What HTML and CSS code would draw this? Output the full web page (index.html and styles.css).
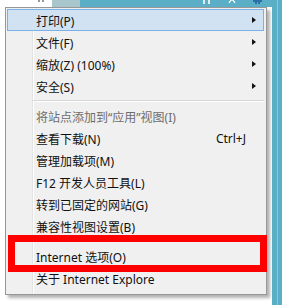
FILE: index.html
```html
<!DOCTYPE html>
<html lang="zh-CN">
<head>
    <meta charset="UTF-8">
    <meta name="viewport" content="width=device-width, initial-scale=1.0">
    <title>工具菜单</title>
    <link rel="stylesheet" href="styles.css">
</head>
<body>
    <div class="screen">
        <div class="main-col">
            <div class="topbar">
                <div class="tb-white">
                    <svg class="tb-dots" width="6" height="3" viewBox="0 0 6 3"><path d="M0 0h2v2H0zM4 0h2v2H4z" fill="#9a9a9a"/></svg>
                </div>
                <div class="tb-gray"></div>
                <div class="tb-teal">
                    <svg class="tb-icon" width="8" height="7" viewBox="0 0 8 7"><path d="M1 0v4M6 0v4" stroke="#fff" stroke-width="1.6"/></svg>
                    <svg class="tb-icon" width="8" height="7" viewBox="0 0 8 7"><path d="M1 3l2-3M7 3L5 0M3 0h2" stroke="#fff" stroke-width="1.3" fill="none"/></svg>
                    <svg class="tb-icon" width="9" height="7" viewBox="0 0 9 7"><path d="M0 0h9v2H7v2H5V2H4v2H2V2H0z" fill="#2d6da8"/></svg>
                </div>
            </div>

            <div class="menu">
                <div class="item active"><span class="label">打印(P)</span><span class="arrow"></span></div>
                <div class="item"><span class="label">文件(F)</span><span class="arrow"></span></div>
                <div class="item"><span class="label">缩放(Z) (100%)</span><span class="arrow"></span></div>
                <div class="item"><span class="label">安全(S)</span><span class="arrow"></span></div>
                <div class="sep"></div>
                <div class="item disabled"><span class="label">将站点添加到“应用”视图(I)</span></div>
                <div class="item"><span class="label">查看下载(N)</span><span class="shortcut">Ctrl+J</span></div>
                <div class="item"><span class="label">管理加载项(M)</span></div>
                <div class="item"><span class="label">F12 开发人员工具(L)</span></div>
                <div class="item"><span class="label">转到已固定的网站(G)</span></div>
                <div class="item"><span class="label">兼容性视图设置(B)</span></div>
                <div class="sep"></div>
                <div class="item"><span class="label">Internet 选项(O)</span></div>
                <div class="item"><span class="label">关于 Internet Explore</span></div>
            </div>
        </div>
        <div class="side-teal"></div>
    </div>

    <div class="mark"></div>
</body>
</html>
```

FILE: styles.css
```css
html, body {
    margin: 0;
    padding: 0;
}

body {
    width: 282px;
    height: 305px;
    overflow: hidden;
    background-color: #fff;
    font-family: "Noto Sans", "Noto Sans CJK SC", sans-serif;
    font-size: 12px;
    color: #111;
}

.screen {
    display: flex;
    height: 305px;
}

.main-col {
    width: 272px;
}

.topbar {
    display: flex;
    height: 7px;
}

.tb-white {
    width: 52px;
    background-color: #fff;
    padding-left: 38px;
    box-sizing: border-box;
}

.tb-dots {
    display: block;
}

.tb-gray {
    width: 28px;
    background-color: #a9c6cd;
}

.tb-teal {
    flex: 1;
    display: flex;
    align-items: flex-start;
    background-color: #5aaec6;
    padding-left: 123px;
    gap: 17px;
}

.tb-icon {
    display: block;
}

.menu {
    margin-left: 5px;
    width: 262px;
    box-sizing: border-box;
    border: 1px solid #979797;
    background-color: #f0f0f0;
    background-image: linear-gradient(to right, transparent 26px, #e2e3e3 26px, #e2e3e3 27px, #fff 27px, #fff 28px, transparent 28px);
    padding: 1px 2px 5px 1px;
    box-shadow: 3px 3px 3px rgba(0, 0, 0, 0.3);
}

.item {
    display: flex;
    align-items: center;
    height: 22px;
    box-sizing: border-box;
    border: 1px solid transparent;
    padding-left: 28px;
    padding-top: 1px;
    white-space: nowrap;
}

.item.active {
    background-color: #d1e3f3;
    border-color: #7ab1e6;
}

.item.disabled {
    color: #6d6d6d;
}

.label {
    flex: 1;
}

.shortcut {
    margin-right: 17px;
}

.arrow {
    width: 17px;
    height: 7px;
    box-sizing: border-box;
    padding-left: 6px;
}

.arrow::before {
    content: "";
    display: block;
    width: 0;
    height: 0;
    border-left: 4px solid #111;
    border-top: 3.5px solid transparent;
    border-bottom: 3.5px solid transparent;
}

.sep {
    height: 1px;
    margin: 3px 0 3px 26px;
    background-color: #d7d7d7;
    border-bottom: 1px solid #fff;
}

.side-teal {
    width: 10px;
    background-color: #5aaec6;
    background-image: linear-gradient(to right, transparent 5px, #8cc6d6 5px, #8cc6d6 6px, transparent 6px);
}

/* red annotation box over the options item */
.mark {
    position: absolute;
    left: 8px;
    top: 235px;
    width: 259px;
    height: 37px;
    box-sizing: border-box;
    border: 7px solid #fe0000;
}
```
